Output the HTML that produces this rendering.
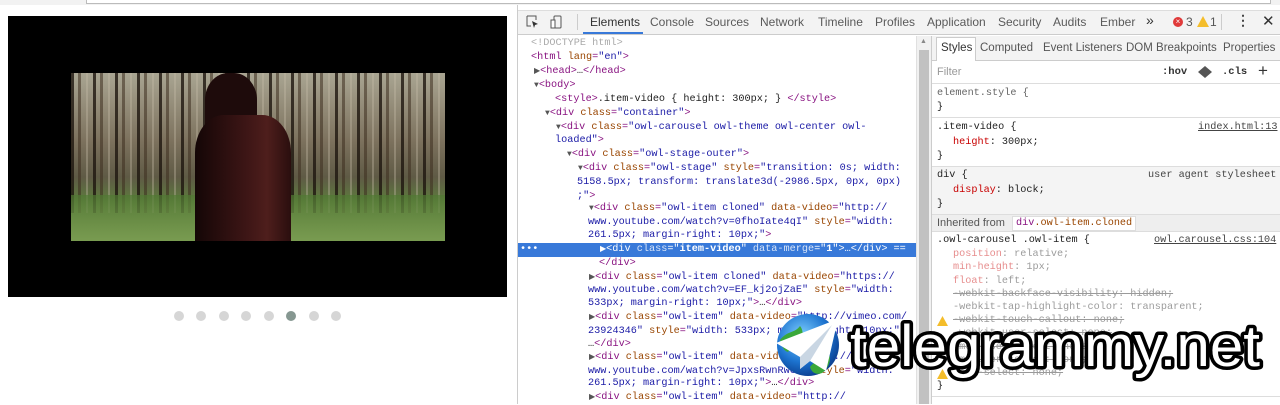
<!DOCTYPE html>
<html><head><meta charset="utf-8"><style>
*{margin:0;padding:0;box-sizing:border-box}
body{width:1280px;height:404px;overflow:hidden;background:#fff;font-family:"Liberation Sans",sans-serif;position:relative}
.abs{position:absolute}
.mono{font-family:"Liberation Mono",monospace;font-size:10.2px;white-space:pre}
.tag{color:#881280}.tg{color:#a894a6}.an{color:#994500}.av{color:#1a1aa6}.tx{color:#222}
.ln{position:absolute;height:14px;line-height:14px}
.tri{font-size:8px;color:#555}
.sp{color:#c80000}.dim{opacity:.45}.st{text-decoration:line-through}
.dot{position:absolute;top:311px;width:10px;height:10px;border-radius:50%;background:#d6d6d6}
</style></head><body>
<div class="abs" style="left:0;top:0;width:1280px;height:5px;background:#f2f2f2"></div>
<div class="abs" style="left:86px;top:0;width:1185px;height:4px;border:1px solid #bbb;border-top:none;background:#fff"></div>
<div class="abs" style="left:8px;top:16px;width:499px;height:281px;background:#000"></div>
<div class="abs" style="left:71px;top:73px;width:374px;height:168px;overflow:hidden;background:linear-gradient(#a9a592 0%,#7d725e 40%,#5f5a45 62%,#5d7a3e 76%,#7e9a55 100%)">
 <div class="abs" style="left:0;top:0;width:374px;height:140px;background:repeating-linear-gradient(90deg,rgba(30,22,15,.8) 0 3px,transparent 3px 7px,rgba(60,45,30,.55) 7px 10px,transparent 10px 15px,rgba(200,190,170,.35) 15px 17px,transparent 17px 22px)"></div>
 <div class="abs" style="left:0;top:122px;width:374px;height:46px;background:linear-gradient(rgba(80,120,50,.7),rgba(120,155,80,.9))"></div>
 <div class="abs" style="left:134px;top:0;width:52px;height:60px;background:#1e0b0b;border-radius:45% 45% 10% 10%"></div>
 <div class="abs" style="left:124px;top:42px;width:96px;height:126px;background:linear-gradient(90deg,#140606,#3e1616 55%,#4e1e1c 75%,#2a0e0e);border-radius:30% 30% 0 0"></div>
</div>
<div class="dot" style="left:174px"></div><div class="dot" style="left:196px"></div><div class="dot" style="left:219px"></div><div class="dot" style="left:241px"></div><div class="dot" style="left:264px"></div><div class="dot" style="left:286px;background:#869791"></div><div class="dot" style="left:309px"></div><div class="dot" style="left:331px"></div>

<div class="abs" style="left:517px;top:5px;width:1px;height:399px;background:#ccc"></div>
<div class="abs" style="left:518px;top:10px;width:762px;height:25px;background:#f3f3f3;border-bottom:1px solid #ccc;border-top:1px solid #ddd"></div>
<svg class="abs" style="left:525px;top:14px" width="40" height="16"><path d="M2 2h9v4M2 2v10h4" stroke="#555" fill="none"/><path d="M7 7l6 3-3 1-1 3z" fill="#333"/><rect x="29" y="2" width="7" height="12" rx="1" stroke="#555" fill="none"/><rect x="26" y="6" width="4" height="8" stroke="#555" fill="#fff"/></svg>
<div class="abs" style="left:577px;top:14px;width:1px;height:16px;background:#ccc"></div>
<div class="abs" style="top:15px;left:590px;font-size:12px;color:#333">Elements</div>
<div class="abs" style="left:583px;top:32px;width:60px;height:2px;background:#3879d9"></div>
<div class="abs" style="top:15px;font-size:12px;color:#5a5a5a;left:650px">Console</div>
<div class="abs" style="top:15px;font-size:12px;color:#5a5a5a;left:705px">Sources</div>
<div class="abs" style="top:15px;font-size:12px;color:#5a5a5a;left:760px">Network</div>
<div class="abs" style="top:15px;font-size:12px;color:#5a5a5a;left:818px">Timeline</div>
<div class="abs" style="top:15px;font-size:12px;color:#5a5a5a;left:875px">Profiles</div>
<div class="abs" style="top:15px;font-size:12px;color:#5a5a5a;left:927px">Application</div>
<div class="abs" style="top:15px;font-size:12px;color:#5a5a5a;left:998px">Security</div>
<div class="abs" style="top:15px;font-size:12px;color:#5a5a5a;left:1053px">Audits</div>
<div class="abs" style="top:15px;font-size:12px;color:#5a5a5a;left:1100px">Ember</div>
<div class="abs" style="top:12px;font-size:14px;color:#333;left:1146px">»</div>
<div class="abs" style="left:1173px;top:17px;width:10px;height:10px;border-radius:50%;background:#e03a3a;color:#fff;font-size:8px;line-height:10px;text-align:center">×</div>
<div class="abs" style="top:15px;font-size:12px;color:#555;left:1186px">3</div>
<svg class="abs" style="left:1197px;top:16px" width="12" height="11"><path d="M6 0L12 11H0z" fill="#f4bd2b"/></svg>
<div class="abs" style="top:15px;font-size:12px;color:#555;left:1210px">1</div>
<div class="abs" style="left:1221px;top:14px;width:1px;height:16px;background:#ccc"></div>
<div class="abs" style="top:12px;font-size:14px;color:#444;left:1236px;font-weight:bold">⋮</div>
<div class="abs" style="top:12px;font-size:15px;color:#333;left:1262px">✕</div>

<div class="mono" style="position:absolute;left:0;top:0">
<div class="ln" style="left:531px;top:37px;color:#aaa">&lt;!DOCTYPE html&gt;</div>
<div class="ln" style="left:531px;top:51px"><span class="tag">&lt;html </span><span class="an">lang</span><span class="tag">=</span><span class="av">"en"</span><span class="tag">&gt;</span></div>
<div class="ln" style="left:534px;top:65px"><span class="tri">▶</span><span class="tag">&lt;head&gt;</span><span class="tx">…</span><span class="tag">&lt;/head&gt;</span></div>
<div class="ln" style="left:534px;top:79px"><span class="tri">▼</span><span class="tag">&lt;body&gt;</span></div>
<div class="ln" style="left:555px;top:93px"><span class="tag">&lt;style&gt;</span><span class="tx">.item-video { height: 300px; } </span><span class="tag">&lt;/style&gt;</span></div>
<div class="ln" style="left:545px;top:107px"><span class="tri">▼</span><span class="tag">&lt;div </span><span class="an">class</span><span class="tag">=</span><span class="av">"container"</span><span class="tag">&gt;</span></div>
<div class="ln" style="left:556px;top:121px"><span class="tri">▼</span><span class="tag">&lt;div </span><span class="an">class</span><span class="tag">=</span><span class="av">"owl-carousel owl-theme owl-center owl-</span></div>
<div class="ln" style="left:555px;top:134px"><span class="av">loaded"</span><span class="tag">&gt;</span></div>
<div class="ln" style="left:567px;top:148px"><span class="tri">▼</span><span class="tag">&lt;div </span><span class="an">class</span><span class="tag">=</span><span class="av">"owl-stage-outer"</span><span class="tag">&gt;</span></div>
<div class="ln" style="left:578px;top:162px"><span class="tri">▼</span><span class="tag">&lt;div </span><span class="an">class</span><span class="tag">=</span><span class="av">"owl-stage"</span> <span class="an">style</span><span class="tag">=</span><span class="av">"transition: 0s; width:</span></div>
<div class="ln" style="left:577px;top:176px"><span class="av">5158.5px; transform: translate3d(-2986.5px, 0px, 0px)</span></div>
<div class="ln" style="left:577px;top:190px"><span class="av">;"</span><span class="tag">&gt;</span></div>
<div class="ln" style="left:589px;top:202px"><span class="tri">▼</span><span class="tag">&lt;div </span><span class="an">class</span><span class="tag">=</span><span class="av">"owl-item cloned"</span> <span class="an">data-video</span><span class="tag">=</span><span class="av">"http://</span></div>
<div class="ln" style="left:588px;top:216px"><span class="av">www.youtube.com/watch?v=0fhoIate4qI"</span> <span class="an">style</span><span class="tag">=</span><span class="av">"width:</span></div>
<div class="ln" style="left:588px;top:229px"><span class="av">261.5px; margin-right: 10px;"</span><span class="tag">&gt;</span></div>
</div>
<div class="abs" style="left:518px;top:243px;width:398px;height:14px;background:#3879d9"></div>
<div class="mono" style="position:absolute;left:0;top:0;color:#fff">
<div class="ln" style="left:520px;top:243px">•••</div>
<div class="ln" style="left:600px;top:243px"><span class="tri" style="color:#fff">▶</span>&lt;div <span style="opacity:.8">class</span>="<b>item-video</b>" <span style="opacity:.8">data-merge</span>="<b>1</b>"&gt;…&lt;/div&gt; ==</div>
</div>
<div class="mono" style="position:absolute;left:0;top:0">
<div class="ln" style="left:599px;top:257px"><span class="tag">&lt;/div&gt;</span></div>
<div class="ln" style="left:589px;top:271px"><span class="tri">▶</span><span class="tag">&lt;div </span><span class="an">class</span><span class="tag">=</span><span class="av">"owl-item cloned"</span> <span class="an">data-video</span><span class="tag">=</span><span class="av">"https://</span></div>
<div class="ln" style="left:588px;top:284px"><span class="av">www.youtube.com/watch?v=EF_kj2ojZaE"</span> <span class="an">style</span><span class="tag">=</span><span class="av">"width:</span></div>
<div class="ln" style="left:588px;top:297px"><span class="av">533px; margin-right: 10px;"</span><span class="tag">&gt;</span><span class="tx">…</span><span class="tag">&lt;/div&gt;</span></div>
<div class="ln" style="left:589px;top:311px"><span class="tri">▶</span><span class="tag">&lt;div </span><span class="an">class</span><span class="tag">=</span><span class="av">"owl-item"</span> <span class="an">data-video</span><span class="tag">=</span><span class="av">"http://vimeo.com/</span></div>
<div class="ln" style="left:588px;top:325px"><span class="av">23924346"</span> <span class="an">style</span><span class="tag">=</span><span class="av">"width: 533px; margin-right: 10px;"</span></div>
<div class="ln" style="left:588px;top:338px"><span class="tx">…</span><span class="tag">&lt;/div&gt;</span></div>
<div class="ln" style="left:589px;top:351px"><span class="tri">▶</span><span class="tag">&lt;div </span><span class="an">class</span><span class="tag">=</span><span class="av">"owl-item"</span> <span class="an">data-video</span><span class="tag">=</span><span class="av">"https://</span></div>
<div class="ln" style="left:588px;top:365px"><span class="av">www.youtube.com/watch?v=JpxsRwnRwCQ"</span> <span class="an">style</span><span class="tag">=</span><span class="av">"width:</span></div>
<div class="ln" style="left:588px;top:377px"><span class="av">261.5px; margin-right: 10px;"</span><span class="tag">&gt;</span><span class="tx">…</span><span class="tag">&lt;/div&gt;</span></div>
<div class="ln" style="left:589px;top:391px"><span class="tri">▶</span><span class="tag">&lt;div </span><span class="an">class</span><span class="tag">=</span><span class="av">"owl-item"</span> <span class="an">data-video</span><span class="tag">=</span><span class="av">"http://</span></div>
</div>

<div class="abs" style="left:916px;top:36px;width:16px;height:368px;background:#f1f1f1;border-left:1px solid #e0e0e0;border-right:1px solid #ccc"></div>
<div class="abs" style="left:919px;top:50px;width:10px;height:354px;background:#c1c1c1"></div>
<div class="abs" style="left:920px;top:38px;font-size:7px;color:#888">▲</div>

<div class="abs" style="left:932px;top:36px;width:348px;height:25px;background:#f3f3f3;border-bottom:1px solid #ccc"></div>
<div class="abs" style="left:936px;top:37px;width:40px;height:24px;background:#fff;border:1px solid #ccc;border-bottom:none"></div>
<div class="abs" style="top:42px;left:941px;font-size:11.5px;color:#333">Styles</div>
<div class="abs" style="top:42px;left:980px;font-size:11.5px;color:#555">Computed</div>
<div class="abs" style="top:42px;left:1043px;font-size:11.5px;color:#555">Event Listeners</div>
<div class="abs" style="top:42px;left:1126px;font-size:11.5px;color:#555">DOM Breakpoints</div>
<div class="abs" style="top:42px;left:1223px;font-size:11.5px;color:#555">Properties</div>
<div class="abs" style="left:932px;top:83px;width:348px;height:1px;background:#ddd"></div>
<div class="abs" style="top:66px;left:937px;font-size:11px;color:#999">Filter</div>
<div class="mono abs" style="top:66px;left:1162px;color:#333;font-weight:bold;font-size:10.5px">:hov</div>
<svg class="abs" style="left:1198px;top:66px" width="14" height="12"><path d="M7 0L14 6 7 12 0 6z" fill="#555"/></svg>
<div class="mono abs" style="top:66px;left:1222px;color:#333;font-weight:bold;font-size:10.5px">.cls</div>
<div class="abs" style="top:61px;left:1258px;font-size:17px;color:#333">+</div>

<div class="mono" style="position:absolute;left:0;top:0;color:#222">
<div class="ln" style="left:937px;top:87px;color:#666">element.style {</div>
<div class="ln" style="left:937px;top:101px">}</div>
<div class="abs" style="left:932px;top:117px;width:348px;height:1px;background:#ddd"></div>
<div class="ln" style="left:937px;top:121px">.item-video {</div>
<div class="ln" style="left:1198px;top:121px;text-decoration:underline;color:#444">index.html:13</div>
<div class="ln" style="left:953px;top:136px"><span class="sp">height</span>: 300px;</div>
<div class="ln" style="left:937px;top:150px">}</div>
</div>
<div class="abs" style="left:932px;top:166px;width:348px;height:48px;background:#f4f4f4;border-top:1px solid #ddd"></div>
<div class="mono" style="position:absolute;left:0;top:0;color:#222">
<div class="ln" style="left:937px;top:169px">div {</div>
<div class="ln" style="left:1148px;top:169px;color:#444">user agent stylesheet</div>
<div class="ln" style="left:953px;top:184px"><span class="sp">display</span>: block;</div>
<div class="ln" style="left:937px;top:198px">}</div>
</div>
<div class="abs" style="left:932px;top:214px;width:348px;height:18px;background:#eee;border-top:1px solid #ddd;border-bottom:1px solid #ddd"></div>
<div class="abs" style="top:217px;left:937px;font-size:11px;color:#555">Inherited from</div>
<div class="abs mono" style="top:216px;left:1012px;padding:0 3px;background:#fff;border:1px solid #ddd;height:15px;line-height:13px"><span class="tag">div</span><span class="an">.owl-item.cloned</span></div>
<div class="mono" style="position:absolute;left:0;top:0;color:#222">
<div class="ln" style="left:937px;top:234px">.owl-carousel .owl-item {</div>
<div class="ln" style="left:1154px;top:234px;text-decoration:underline;color:#444">owl.carousel.css:104</div>
<div class="ln dim" style="left:953px;top:248px"><span class="sp">position</span>: relative;</div>
<div class="ln dim" style="left:953px;top:261px"><span class="sp">min-height</span>: 1px;</div>
<div class="ln dim" style="left:953px;top:275px"><span class="sp">float</span>: left;</div>
<div class="ln dim st" style="left:953px;top:288px">-webkit-backface-visibility: hidden;</div>
<div class="ln dim" style="left:953px;top:301px">-webkit-tap-highlight-color: transparent;</div>
<div class="ln dim st" style="left:953px;top:314px">-webkit-touch-callout: none;</div>
<div class="ln dim st" style="left:953px;top:327px">-webkit-user-select: none;</div>
<div class="ln dim st" style="left:953px;top:341px">-moz-user-select: none;</div>
<div class="ln dim st" style="left:953px;top:354px">-ms-user-select: none;</div>
<div class="ln dim st" style="left:953px;top:367px">user-select: none;</div>
<div class="ln" style="left:937px;top:380px">}</div>
</div>
<svg class="abs" style="left:937px;top:316px" width="11" height="10"><path d="M5.5 0L11 10H0z" fill="#f4bd2b"/></svg>
<svg class="abs" style="left:937px;top:369px" width="11" height="10"><path d="M5.5 0L11 10H0z" fill="#f4bd2b"/></svg>
<div class="abs" style="left:932px;top:396px;width:348px;height:1px;background:#ddd"></div>

<svg class="abs" style="left:770px;top:305px" width="510" height="90">
 <defs><radialGradient id="g" cx="40%" cy="35%" r="70%"><stop offset="0" stop-color="#7fd0ff"/><stop offset=".6" stop-color="#1d74d0"/><stop offset="1" stop-color="#0a3a8a"/></radialGradient></defs>
 <circle cx="38" cy="40" r="31" fill="url(#g)"/>
 <path d="M10 35c8-10 14-6 20-14 5 6 0 12 8 16-6 8-14 2-20 10-6-2-6-8-8-12z" fill="#3aa83a"/>
 <path d="M40 62c6-8 14-6 18-14 4 4 2 14-6 20-6 2-10 0-12-6z" fill="#3aa83a"/>
 <path d="M6 38L68 14 56 66 40 56 30 64 30 52z" fill="#fff"/>
 <path d="M30 52L62 20 40 56 30 64z" fill="#c9d6e3"/>
 <text x="80" y="61" font-family="Liberation Sans, sans-serif" font-size="58" textLength="410" lengthAdjust="spacingAndGlyphs" fill="#fff" stroke="#000" stroke-width="7" stroke-linejoin="round" style="paint-order:stroke">telegrammy.net</text>
</svg>
</body></html>
